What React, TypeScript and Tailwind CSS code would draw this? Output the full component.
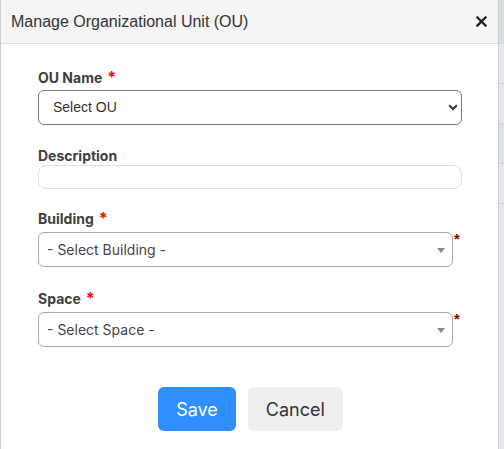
import { useState } from 'react'

const inter = '[font-family:Inter,"Noto_Sans",sans-serif]'

function Star() {
  return <span className="ml-[5px] text-[16px] font-bold leading-none text-[#f00]">*</span>
}

function Label({ text, required }: { text: string; required?: boolean }) {
  return (
    <label className={`block text-[14px] font-bold leading-[17px] text-[#404040] ${inter}`}>
      {text}
      {required && <Star />}
    </label>
  )
}

function PickerSelect({ placeholder }: { placeholder: string }) {
  return (
    <div className="flex items-start">
      <div className="relative flex h-[35px] w-[415px] items-center rounded-[6px] border border-[#aaa] bg-white pl-[8px]">
        <span className={`text-[14px] text-[#444] ${inter}`}>{placeholder}</span>
        {/* select2 style caret */}
        <svg width="8" height="5" viewBox="0 0 8 5" className="absolute right-[7px] top-[15px]">
          <path d="M0 0h8L4 5z" fill="#888" />
        </svg>
      </div>
      <span className="ml-[1px] mt-[-1px] text-[15px] font-bold leading-[15px] text-[#8b0000] [font-family:'Liberation_Sans',Arial,sans-serif]">*</span>
    </div>
  )
}

export default function App() {
  const [desc, setDesc] = useState('')

  return (
    <div className="flex h-[449px] w-[504px] overflow-hidden bg-[#e6e8eb]">
      <div className="flex w-[499px] shrink-0 flex-col border-l border-r border-[#cfcfcf] bg-white">
        {/* Header */}
        <div className="flex h-[44px] shrink-0 items-center justify-between border-b border-[#dcdcdc] bg-[#f5f5f5] pl-[10px] pr-[10px]">
          <h2 className="text-[16px] font-normal text-[#333] [font-family:'Liberation_Sans',Arial,sans-serif]">
            Manage Organizational Unit (OU)
          </h2>
          <button className="flex h-[14px] w-[14px] items-center justify-center">
            <svg width="11" height="11" viewBox="0 0 11 11">
              <path d="M1.5 1.5l8 8M9.5 1.5l-8 8" stroke="#222" strokeWidth="2.4" strokeLinecap="square" />
            </svg>
          </button>
        </div>

        {/* Body */}
        <div className="flex flex-col px-[37px] pt-[25px]">
          <Label text="OU Name" required />
          <div className="relative mt-[4px]">
            <select className="h-[35px] w-[424px] appearance-none rounded-[6px] border border-[#767676] bg-white pl-[14px] text-[14px] text-[#333] outline-none [font-family:'Liberation_Sans',Arial,sans-serif]">
              <option>Select OU</option>
            </select>
            <svg width="10" height="7" viewBox="0 0 10 7" className="pointer-events-none absolute left-[410px] top-[14px]">
              <path d="M1.2 1.2L5 5l3.8-3.8" fill="none" stroke="#333" strokeWidth="2" />
            </svg>
          </div>

          <div className="mt-[22px]">
            <Label text="Description" />
          </div>
          <input
            value={desc}
            onChange={e => setDesc(e.target.value)}
            className="mt-[1px] h-[24px] w-[424px] rounded-[8px] border border-[#dedede] bg-white px-2 text-[14px] outline-none"
          />

          <div className="mt-[21px]">
            <Label text="Building" required />
          </div>
          <div className="mt-[5px]">
            <PickerSelect placeholder="- Select Building -" />
          </div>

          <div className="mt-[23px]">
            <Label text="Space" required />
          </div>
          <div className="mt-[5px]">
            <PickerSelect placeholder="- Select Space -" />
          </div>

          {/* Footer buttons */}
          <div className="mt-[40px] flex justify-center gap-[12px] pl-[2px]">
            <button className={`h-[44px] rounded-[6px] bg-[#2f8fff] px-[18px] text-[18px] text-white ${inter}`}>
              Save
            </button>
            <button className={`h-[44px] rounded-[6px] bg-[#efefef] px-[18px] text-[18px] text-[#333] ${inter}`}>
              Cancel
            </button>
          </div>
        </div>
      </div>

      {/* Page behind the dialog */}
      <div className="flex flex-1 flex-col">
        <div className="h-[44px] bg-[#d8dde3]" />
        <div className="h-[40px] border-b border-[#d0d4d8]" />
        <div className="h-[40px] border-b border-[#d0d4d8]" />
        <div className="h-[40px] border-b border-[#d0d4d8] bg-[#dfe2e5]" />
        <div className="h-[40px] border-b border-[#d0d4d8]" />
      </div>
    </div>
  )
}
